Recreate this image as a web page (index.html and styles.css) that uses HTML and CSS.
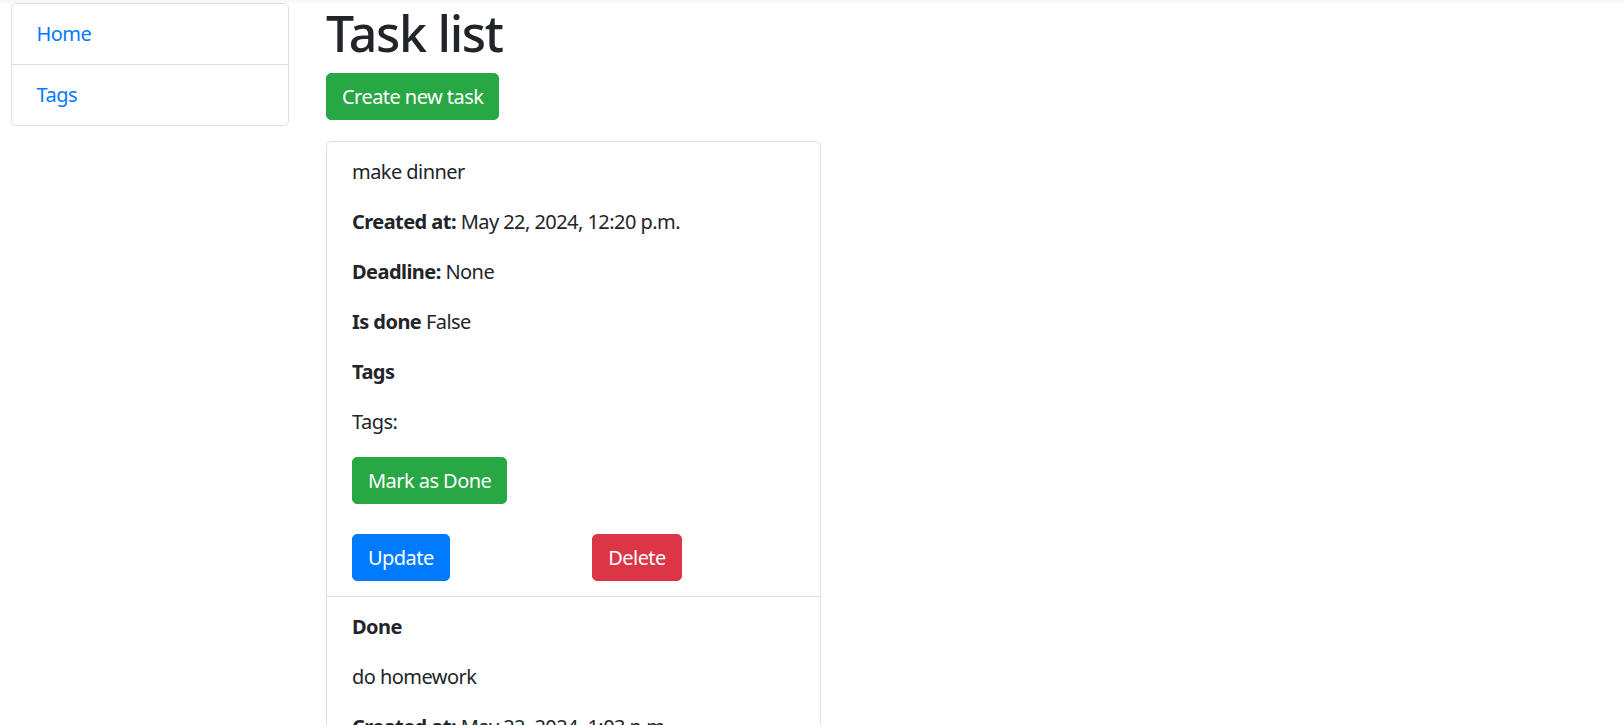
FILE: index.html
```html
<!DOCTYPE html>
<html lang="en">
<head>
<meta charset="utf-8">
<title>Task list</title>
<link rel="stylesheet" href="styles.css">
</head>
<body>
<div class="topbar"></div>
<div class="layout">
  <nav class="sidebar">
    <a class="side-item" href="#">Home</a>
    <a class="side-item" href="#">Tags</a>
  </nav>
  <main class="content">
    <h1 class="title">Task list</h1>
    <a class="btn btn-success" href="#">Create new task</a>
    <ul class="task-list">
      <li class="task">
        <p>make dinner</p>
        <p><strong>Created at:</strong> May 22, 2024, 12:20 p.m.</p>
        <p><strong>Deadline:</strong> None</p>
        <p><strong>Is done</strong> False</p>
        <p><strong>Tags</strong></p>
        <p>Tags:</p>
        <form class="done-form"><button type="button" class="btn btn-success">Mark as Done</button></form>
        <div class="actions">
          <div class="col"><a class="btn btn-primary" href="#">Update</a></div>
          <div class="col"><a class="btn btn-danger" href="#">Delete</a></div>
        </div>
      </li>
      <li class="task">
        <p><strong>Done</strong></p>
        <p>do homework</p>
        <p><strong>Created at:</strong> May 22, 2024, 1:03 p.m.</p>
        <p><strong>Deadline:</strong> None</p>
        <p><strong>Is done</strong> True</p>
      </li>
    </ul>
  </main>
</div>
</body>
</html>
```
FILE: styles.css
```css
* { box-sizing: border-box; }
html, body { margin: 0; padding: 0; }
body {
  font-family: "Segoe UI", "Noto Sans", "Open Sans", sans-serif;
  font-size: 20px;
  line-height: 1.5;
  letter-spacing: -0.55px;
  color: #212529;
  background: #fff;
}
.topbar { height: 3px; background: #f7faf0; }
.layout { display: flex; align-items: flex-start; padding-left: 10.5px; }
.sidebar {
  width: 278px;
  flex: 0 0 278px;
  display: flex;
  flex-direction: column;
  border: 1px solid #dfdfdf;
  border-radius: 5px;
  margin-top: 0.3px;
}
.side-item {
  display: block;
  padding: 15px 25px;
  color: #007bff;
  text-decoration: none;
  line-height: 30px;
}
.side-item + .side-item { border-top: 1px solid #dfdfdf; }
.content { margin-left: 37.5px; width: 495px; }
.title {
  font-size: 50px;
  font-weight: 500;
  line-height: 1.2;
  letter-spacing: -1.3px;
  margin: 0 0 10px;
  color: #212529;
}
.btn {
  display: inline-block;
  padding: 7.5px 15px;
  border: 1px solid transparent;
  border-radius: 5px;
  font-family: inherit;
  font-size: 20px;
  line-height: 30px;
  letter-spacing: -0.55px;
  color: #fff;
  text-decoration: none;
  cursor: pointer;
}
.btn-success { background: #28a745; border-color: #28a745; }
.btn-primary { background: #007bff; border-color: #007bff; }
.btn-danger { background: #dc3545; border-color: #dc3545; }
.task-list {
  list-style: none;
  margin: 21px 0 0;
  padding: 0;
  border: 1px solid #dfdfdf;
  border-radius: 5px;
}
.task { padding: 15px 25px; }
.task + .task { border-top: 1px solid #dfdfdf; }
.task p { margin: 0 0 20px; line-height: 30px; }
.task strong { font-weight: 700; }
.done-form { margin: 0 0 30px; }
.actions {
  display: grid;
  grid-template-columns: 1fr 1fr;
  column-gap: 37.5px;
}
.actions .btn { vertical-align: top; }
```
